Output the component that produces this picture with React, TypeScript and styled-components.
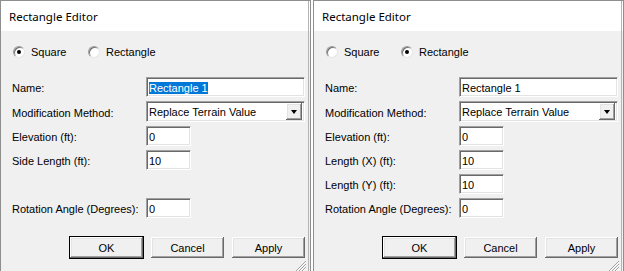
import styled, { createGlobalStyle } from "styled-components";

type Mode = "square" | "rectangle";

type FieldRow =
  | { kind: "text"; label: string; value: string; width: number; selected?: boolean }
  | { kind: "select"; label: string; value: string }
  | { kind: "spacer" };

const GlobalStyle = createGlobalStyle`
  html, body {
    margin: 0;
    padding: 0;
    background: #ffffff;
    overflow: hidden;
  }
  body {
    font-family: "Liberation Sans", Arial, sans-serif;
    font-size: 11px;
    color: #000;
  }
`;

const Page = styled.div`
  display: flex;
  gap: 2px;
  width: 624px;
  height: 271px;
`;

const Window = styled.div`
  position: relative;
  width: 311px;
  height: 272px;
  box-sizing: border-box;
  border: 1px solid #8e8e8e;
  display: flex;
  flex-direction: column;
  background: #f0f0f0;

  /* inner frame line on the right edge */
  &::before {
    content: "";
    position: absolute;
    top: 0;
    bottom: 0;
    right: 1px;
    width: 1px;
    background: #b4b4b4;
  }
`;

const TitleBar = styled.div`
  height: 30px;
  flex: none;
  background: #ffffff;
  display: flex;
  align-items: center;
  padding-left: 8px;
  font-family: "Noto Sans", "Open Sans", sans-serif;
  font-size: 11.5px;
  color: #000;
`;

const Client = styled.div`
  flex: 1;
  display: flex;
  flex-direction: column;
  padding: 13px 4px 0 11px;
`;

const RadioRow = styled.div`
  display: flex;
  align-items: center;
  height: 16px;
  padding-left: 1px;
`;

const RadioOption = styled.label`
  display: flex;
  align-items: center;
  gap: 6px;
  width: 75px;
`;

const RadioCircle = styled.span<{ $checked: boolean }>`
  position: relative;
  width: 12px;
  height: 12px;
  box-sizing: border-box;
  border-radius: 50%;
  background: #ffffff;
  border: 1px solid;
  border-color: #9a9a9a #e6e6e6 #e6e6e6 #9a9a9a;
  box-shadow: inset 1px 1px 0 #6f6f6f;

  &::after {
    content: "";
    display: ${(p) => (p.$checked ? "block" : "none")};
    position: absolute;
    left: 3px;
    top: 3px;
    width: 4px;
    height: 4px;
    border-radius: 50%;
    background: #000;
  }
`;

const Form = styled.div`
  display: flex;
  flex-direction: column;
  gap: 4px;
  margin-top: 17px;
`;

const Row = styled.div<{ $height: number }>`
  display: flex;
  align-items: center;
  height: ${(p) => p.$height}px;
`;

const Label = styled.div`
  width: 134px;
  flex: none;
  padding-top: 2px;
`;

const TextBox = styled.div<{ $width: number }>`
  width: ${(p) => p.$width}px;
  height: 100%;
  box-sizing: border-box;
  background: #ffffff;
  border: 1px solid;
  border-color: #a0a0a0 #ffffff #ffffff #a0a0a0;
  box-shadow: inset 1px 1px 0 #696969, inset -1px -1px 0 #e3e3e3;
  display: flex;
  align-items: center;
  padding-left: 2px;
  padding-top: 1px;
`;

const Selection = styled.span`
  background: #0078d7;
  color: #ffffff;
`;

const SelectBox = styled(TextBox)`
  padding-right: 2px;
  justify-content: space-between;
  padding-top: 0;
`;

const ArrowButton = styled.span`
  width: 16px;
  height: 17px;
  flex: none;
  box-sizing: border-box;
  background: #f0f0f0;
  box-shadow: inset -1px -1px 0 #696969, inset 1px 1px 0 #ffffff,
    inset -2px -2px 0 #a0a0a0, inset 2px 2px 0 #e3e3e3;
  display: flex;
  align-items: center;
  justify-content: center;

  &::after {
    content: "";
    width: 0;
    height: 0;
    border-left: 3.5px solid transparent;
    border-right: 3.5px solid transparent;
    border-top: 4px solid #000;
  }
`;

const ButtonRow = styled.div`
  display: flex;
  justify-content: flex-end;
  gap: 6px;
  margin-top: 18px;
`;

const Button = styled.div<{ $default?: boolean }>`
  width: 75px;
  height: 23px;
  box-sizing: border-box;
  background: #f0f0f0;
  display: flex;
  align-items: center;
  justify-content: center;
  border: 1px solid ${(p) => (p.$default ? "#000" : "#f0f0f0")};
  box-shadow: inset -1px -1px 0 #696969, inset 1px 1px 0 #ffffff,
    inset -2px -2px 0 #a0a0a0, inset 2px 2px 0 #e3e3e3;
  padding-top: 1px;
`;

const Grip = styled.svg`
  position: absolute;
  right: 4px;
  bottom: 0;
`;

function SizeGrip() {
  return (
    <Grip width="10" height="10" viewBox="0 0 10 10">
      {[0, 3, 6].map((o) => (
        <line key={o} x1={10} y1={o} x2={o} y2={10} stroke="#a0a0a0" strokeWidth="1" />
      ))}
      {[1, 4, 7].map((o) => (
        <line key={o} x1={10} y1={o} x2={o} y2={10} stroke="#ffffff" strokeWidth="1" />
      ))}
    </Grip>
  );
}

function Dialog({ mode }: { mode: Mode }) {
  const rows: FieldRow[] = [
    { kind: "text", label: "Name:", value: "Rectangle 1", width: 159, selected: mode === "square" },
    { kind: "select", label: "Modification Method:", value: "Replace Terrain Value" },
    { kind: "text", label: "Elevation (ft):", value: "0", width: 45 },
    ...(mode === "square"
      ? ([
          { kind: "text", label: "Side Length (ft):", value: "10", width: 45 },
          { kind: "spacer" },
        ] as FieldRow[])
      : ([
          { kind: "text", label: "Length (X) (ft):", value: "10", width: 45 },
          { kind: "text", label: "Length (Y) (ft):", value: "10", width: 45 },
        ] as FieldRow[])),
    { kind: "text", label: "Rotation Angle (Degrees):", value: "0", width: 45 },
  ];

  return (
    <Window>
      <TitleBar>Rectangle Editor</TitleBar>
      <Client>
        <RadioRow>
          <RadioOption>
            <RadioCircle $checked={mode === "square"} />
            Square
          </RadioOption>
          <RadioOption>
            <RadioCircle $checked={mode === "rectangle"} />
            Rectangle
          </RadioOption>
        </RadioRow>

        <Form>
          {rows.map((row, i) => {
            if (row.kind === "spacer") return <Row key={i} $height={20} />;
            if (row.kind === "select") {
              return (
                <Row key={i} $height={21}>
                  <Label>{row.label}</Label>
                  <SelectBox $width={159}>
                    {row.value}
                    <ArrowButton />
                  </SelectBox>
                </Row>
              );
            }
            return (
              <Row key={i} $height={20}>
                <Label>{row.label}</Label>
                <TextBox $width={row.width}>
                  {row.selected ? <Selection>{row.value}</Selection> : row.value}
                </TextBox>
              </Row>
            );
          })}
        </Form>

        <ButtonRow>
          <Button $default>OK</Button>
          <Button>Cancel</Button>
          <Button>Apply</Button>
        </ButtonRow>
      </Client>
      <SizeGrip />
    </Window>
  );
}

export default function App() {
  return (
    <>
      <GlobalStyle />
      <Page>
        <Dialog mode="square" />
        <Dialog mode="rectangle" />
      </Page>
    </>
  );
}
